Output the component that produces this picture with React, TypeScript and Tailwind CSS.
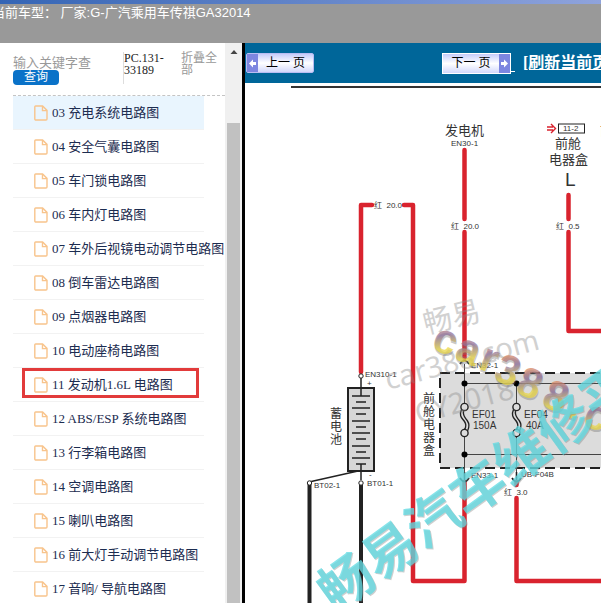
import type { ReactNode } from "react";

const circuits = [
  "03 充电系统电路图",
  "04 安全气囊电路图",
  "05 车门锁电路图",
  "06 车内灯电路图",
  "07 车外后视镜电动调节电路图",
  "08 倒车雷达电路图",
  "09 点烟器电路图",
  "10 电动座椅电路图",
  "11 发动机1.6L 电路图",
  "12 ABS/ESP 系统电路图",
  "13 行李箱电路图",
  "14 空调电路图",
  "15 喇叭电路图",
  "16 前大灯手动调节电路图",
  "17 音响/ 导航电路图",
];

const ACTIVE = 0;
const MARKED = 8;

function FileIcon() {
  return (
    <svg width="14" height="16" viewBox="0 0 14 16" fill="none" stroke="#f8c48c" strokeWidth="1.4" className="shrink-0">
      <path d="M1.6 1h7L13 5.4V14a1 1 0 0 1-1 1H1.8a1 1 0 0 1-1-1V1.8a.8.8 0 0 1 .8-.8Z" />
      <path d="M8.5 1v4.6H13" />
    </svg>
  );
}

function Sidebar() {
  return (
    <aside className="flex w-[242px] shrink-0 overflow-hidden">
      <div className="flex w-[225px] shrink-0 flex-col pl-[13px]">
        <form className="flex h-[53px] shrink-0 items-start border-b border-dashed border-[#c4c4c4] pt-[9px]">
          <div className="flex w-[110px] flex-col items-start pt-1">
            <input
              type="text"
              aria-label="关键字"
              placeholder="输入关键字查询"
              className="h-[14px] w-[78px] text-[13px] leading-[14px] placeholder:text-[#999] focus:outline-none"
            />
            <button type="button" className="h-[15px] w-[46px] rounded-[4px] bg-[#0a72c8] text-xs leading-[15px] text-white">
              查询
            </button>
          </div>
          <div className="w-[58px] border-l border-[#ddd] pb-2 text-xs leading-3 text-[#222]">
            PC.131-
            <br />
            33189
          </div>
          <button type="button" className="w-9 text-left text-xs leading-3 text-[#999]">
            折叠全部
          </button>
        </form>
        <ul className="w-[191px]">
          {circuits.map((name, i) => (
            <li
              key={name}
              className={`relative h-[34px] border-b border-[#f2f2f2] ${i === ACTIVE ? "bg-[#e9f5fe]" : ""}`}
            >
              <a href="#" className="flex h-full items-center gap-1 pl-[21px] text-[13px] whitespace-nowrap text-[#1c2c50]">
                <FileIcon />
                {name}
              </a>
              {i === MARKED && (
                <span className="pointer-events-none absolute top-0 left-[9px] h-[30px] w-[177px] border-3 border-[#e23b3b]" />
              )}
            </li>
          ))}
        </ul>
      </div>
      <div className="flex w-[17px] flex-col items-center bg-[#f0f0f0]">
        <svg width="8" height="80" viewBox="0 0 8 80" className="shrink-0">
          <path d="M0.5 11 4 7l3.5 4Z" fill="#444" />
        </svg>
        <div className="w-[13px] flex-1 bg-[#c1c1c1]" />
      </div>
    </aside>
  );
}

function Arrow({ left = false }: { left?: boolean }) {
  return (
    <span className="flex h-full w-[11px] items-center justify-center bg-[#7d86e0]">
      <svg width="9" height="9" viewBox="0 0 9 9" fill="#fff">
        <path d={left ? "M1 4.5 5 .5v2.500H8v3H5v2.500Z" : "M8 4.5 4 .5v2.500H1v3h3v2.500Z"} />
      </svg>
    </span>
  );
}

function Toolbar() {
  return (
    <nav className="flex h-10 shrink-0 items-center bg-[#006699] pl-px whitespace-nowrap">
      <button
        type="button"
        className="flex h-5 w-[68px] shrink-0 items-center rounded-xs border border-[#b9bdf2] bg-linear-to-b from-[#c6ccfa] via-white to-[#d3d8fb] text-xs text-black"
      >
        <Arrow left />
        <span className="flex-1">上一 页</span>
      </button>
      <button
        type="button"
        className="ml-32 flex h-[21px] w-[69px] shrink-0 items-center border border-white bg-linear-to-b from-[#c6ccfa] via-white to-[#d3d8fb] text-xs text-black"
      >
        <span className="flex-1">下一 页</span>
        <Arrow />
      </button>
      <span className="h-[18px] w-1 shrink-0 border-b border-white" />
      <a href="#" className="ml-2 text-base font-bold text-white underline">
        [刷新当前页]
      </a>
    </nav>
  );
}

function Wire({ d }: { d: string }) {
  return <path d={d} fill="none" stroke="#d9232e" strokeWidth="4.5" strokeLinecap="round" strokeLinejoin="round" />;
}

function Label({ x, y, size = 8, children }: { x: number; y: number; size?: number; children: ReactNode }) {
  return (
    <text x={x} y={y} fontSize={size} fill="#333">
      {children}
    </text>
  );
}

// two terminals joined by an S shaped double line
function Fuse({ x }: { x: number }) {
  return (
    <g transform={`translate(${x} 0)`} fill="none" stroke="#222" strokeWidth="1.4">
      <circle cy="407" r="3.6" fill="#ddd" />
      <circle cy="433" r="3.6" fill="#ddd" />
      <path d="M-3 409.5c-3 7 1 9 3 12 2 3 2 5 0 8M-1 411c-1 5 2 7 4 10 2 3 2 6 0 10" />
    </g>
  );
}

const cells = [396, 408, 421, 433, 446, 458];

// letters of the coloured stamp: glyph, x, y
const stamp: [string, number, number][] = [
  ["c", 430, 348],
  ["a", 453, 358],
  ["r", 477, 368],
  ["3", 492, 379],
  ["8", 514, 392],
  ["8", 540, 405],
  [".", 566, 416],
  ["c", 581, 424],
  ["o", 605, 436],
];

function Diagram() {
  return (
    <svg
      width="640"
      height="520"
      viewBox="245 83 640 520"
      className="shrink-0"
      fontFamily="'Liberation Sans', 'Noto Sans CJK SC', sans-serif"
    >
      <defs>
        <linearGradient id="stamp" x1="0" y1="0" x2="0.3" y2="1">
          <stop offset="0.25" stopColor="#e08a5c" />
          <stop offset="0.5" stopColor="#8d6f9c" />
          <stop offset="0.8" stopColor="#e9d648" />
        </linearGradient>
      </defs>
      <path d="M291 87H885" stroke="#333" strokeWidth="2" />

      {/* fuse box */}
      <rect x="440" y="373" width="400" height="95" fill="#dcdcdc" stroke="#222" strokeWidth="2" strokeDasharray="10 5" />

      <Wire d="M361 372V205H372M404 205H413V581H464.5V482" />
      <Wire d="M464.5 150V219M464.5 232V358" />
      <Wire d="M568.5 195V219M568.5 232V331H885" />
      <Wire d="M516.5 482V485M516.5 498V581H885" />

      {/* battery */}
      <g stroke="#222" fill="none">
        <rect x="348" y="388" width="26" height="83" fill="#d6d6d6" strokeWidth="2" />
        <path d="M361 378V396M361 464V480M358 471 309 482" strokeWidth="1.5" />
        {cells.map((y) => (
          <path key={y} d={`M352 ${y}h18M356 ${y + 6}h10`} strokeWidth="1.6" />
        ))}
        <path d="M309.5 484V603M361 484V603" strokeWidth="4" />
        <circle cx="361" cy="376" r="2.2" fill="#fff" />
        <circle cx="309.5" cy="483" r="2.2" fill="#fff" />
        <circle cx="361" cy="483" r="2.2" fill="#fff" />
      </g>

      {/* fuses */}
      <path
        d="M464.5 364V403M464.5 437V478M516.5 384V403M516.5 437V478M464.5 383.5H840M464.5 454.5H840"
        fill="none"
        stroke="#444"
      />
      <circle cx="464.5" cy="383.5" r="3" />
      <circle cx="464.5" cy="454.5" r="3" />
      <circle cx="516.5" cy="383.5" r="3" />
      <Fuse x={464.5} />
      <Fuse x={516.5} />
      <path
        d="M460 364q4.5-7 9 0M460 478q4.5 7 9 0M512 478q4.5 7 9 0M464.5 472v8M516.5 472v8"
        fill="none"
        stroke="#222"
        strokeWidth="1.6"
      />

      <Label x={445} y={135} size={13}>发电机</Label>
      <Label x={451} y={146}>EN30-1</Label>
      <Label x={555} y={148} size={13}>前舱</Label>
      <Label x={549} y={164} size={13}>电器盒</Label>
      <Label x={565} y={186} size={19}>L</Label>
      <Label x={600} y={135} size={13}>前舱</Label>
      <rect x="558.5" y="124" width="26" height="9" fill="none" stroke="#222" />
      <Label x={563} y={131}>11-2</Label>
      <path d="M547 127h6M547 130h6M551 124l4.5 4.5-4.5 4.5" fill="none" stroke="#d9232e" strokeWidth="1.4" />

      <Label x={374} y={208}>红&#160; 20.0</Label>
      <Label x={451} y={229}>红&#160; 20.0</Label>
      <Label x={556} y={229}>红&#160; 0.5</Label>
      <Label x={504} y={495}>红&#160; 3.0</Label>
      <Label x={365} y={377}>EN310-1</Label>
      <Label x={367} y={386}>+</Label>
      <Label x={369} y={477}>-</Label>
      <Label x={314} y={488}>BT02-1</Label>
      <Label x={367} y={486}>BT01-1</Label>
      <Label x={471} y={368}>EN32-1</Label>
      <Label x={471} y={478}>EN33-1</Label>
      <Label x={521} y={477}>UB-F04B</Label>
      <Label x={472} y={418} size={10}>EF01</Label>
      <Label x={473} y={429} size={10}>150A</Label>
      <Label x={524} y={418} size={10}>EF04</Label>
      <Label x={526} y={429} size={10}>40A</Label>
      {["蓄", "电", "池"].map((c, i) => (
        <Label key={c} x={330} y={418 + i * 13} size={12}>{c}</Label>
      ))}
      {["前", "舱", "电", "器", "盒"].map((c, i) => (
        <Label key={c} x={423} y={403 + i * 13} size={12}>{c}</Label>
      ))}

      {/* watermarks */}
      <g fill="#888" opacity="0.38" fontFamily="'Noto Sans', 'Noto Sans CJK SC', sans-serif">
        <text transform="translate(426 334) rotate(-14)" fontSize="29">畅易</text>
        <text transform="translate(388 390) rotate(-15)" fontSize="29">car388.com</text>
        <text transform="translate(418 424) rotate(-15)" fontSize="29">CY2018</text>
      </g>
      <g fontSize="42" fontWeight="bold" fontFamily="'Liberation Sans', sans-serif">
        {stamp.map(([c, x, y]) => (
          <g key={x} transform={`translate(${x} ${y}) rotate(22)`}>
            <text x="1" y="2" fill="#777" opacity="0.4">{c}</text>
            <text fill="url(#stamp)" opacity="0.75">{c}</text>
          </g>
        ))}
      </g>
      <g fontSize="54" fontWeight="bold" fontFamily="'Noto Sans CJK SC', sans-serif">
        <text transform="translate(337 615) rotate(-36)" fill="#777" opacity="0.35">畅易汽车维修平台</text>
        <text transform="translate(336 614) rotate(-36)" fill="#5edbe3" opacity="0.75">畅易汽车维修平台</text>
      </g>
    </svg>
  );
}

export default function App() {
  return (
    <div className="flex h-screen flex-col overflow-hidden bg-white font-['Liberation_Serif','Noto_Sans_CJK_SC',serif]">
      <header className="h-[43px] shrink-0 overflow-hidden bg-[#999]">
        <div className="h-1 bg-linear-to-r from-[#3465b5] to-[#8fa3dc]" />
        <h1 className="-ml-2 font-['Liberation_Sans','Noto_Sans_CJK_SC',sans-serif] text-[13px] leading-[17px] whitespace-pre text-white">
          当前车型： 厂家:G-广汽乘用车传祺GA32014
        </h1>
      </header>
      <div className="flex min-h-0 flex-1">
        <Sidebar />
        <main className="flex min-w-0 flex-1 flex-col overflow-hidden border-l-3 border-black">
          <Toolbar />
          <Diagram />
        </main>
      </div>
    </div>
  );
}
